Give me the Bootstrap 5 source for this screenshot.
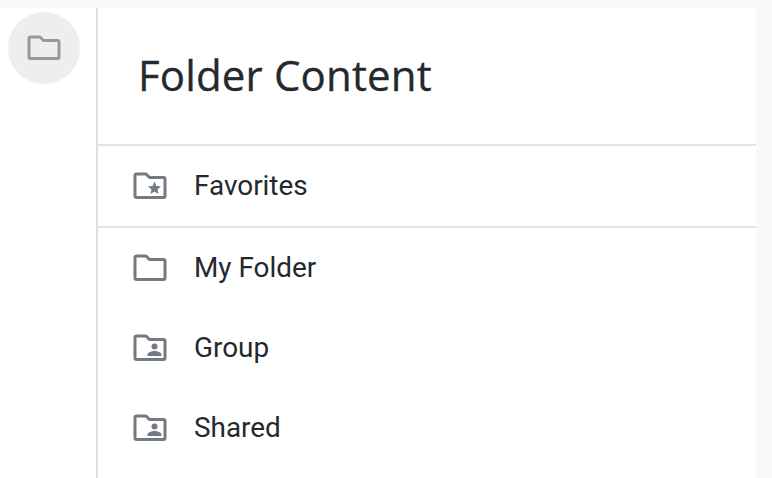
<!DOCTYPE html>
<html lang="en">
<head>
    <meta charset="UTF-8">
    <meta name="viewport" content="width=device-width, initial-scale=1.0">
    <title>Folder Content</title>
    <link href="https://cdn.jsdelivr.net/npm/bootstrap@5.3.0/dist/css/bootstrap.min.css" rel="stylesheet">
    <style>
        html, body {
            height: 100%;
            overflow: hidden;
        }
        body {
            background-color: #f8f8f8;
            font-family: Roboto, sans-serif;
            color: #24292e;
        }
        .page-shell {
            height: 100%;
            padding: 8px 16px 0 0;
        }
        .side-rail {
            width: 98px;
            padding: 4px 0 0 8px;
            border-right: 2px solid #dfdfe3;
        }
        .rail-circle {
            width: 72px;
            height: 72px;
            background-color: #eeeeee;
        }
        .rail-circle svg {
            width: 36px;
            height: 26px;
            margin-top: -1px;
            stroke: #97999e;
        }
        .panel-title {
            height: 138px;
            padding: 41px 0 0 40px;
            border-bottom: 2px solid #e3e3e6;
            font-family: "Open Sans", sans-serif;
            font-size: 42px;
            line-height: 52px;
            font-weight: 400;
            letter-spacing: 0.15px;
            margin: 0;
            -webkit-text-stroke: 0.3px #24292e;
        }
        .folder-row {
            height: 80px;
            padding: 0 0 0 35px;
            gap: 27px;
            font-size: 27.9px;
            color: inherit;
        }
        .folder-row svg {
            width: 34px;
            height: 28px;
            flex-shrink: 0;
        }
        .folder-row.first-row {
            border-bottom: 2px solid #e3e3e6;
            height: 82px;
            padding-bottom: 1px;
        }
        .folder-line {
            fill: none;
            stroke: #737a84;
            stroke-width: 3;
            stroke-linejoin: round;
        }
        .folder-glyph {
            fill: #737a84;
        }
    </style>
</head>
<body>
    <div class="page-shell d-flex">
        <div class="side-rail flex-shrink-0 bg-white">
            <div class="rail-circle rounded-circle d-flex align-items-center justify-content-center">
                <svg viewBox="0 0 34 26" fill="none" stroke-width="3" stroke-linejoin="round">
                    <path d="M2 3.500a1.500 1.500 0 0 1 1.500-1.500h9.500l3.500 3.500h14a1.500 1.500 0 0 1 1.500 1.500v15a1.500 1.500 0 0 1-1.500 1.500h-27a1.500 1.500 0 0 1-1.500-1.500z"/>
                </svg>
            </div>
        </div>
        <div class="flex-grow-1 bg-white">
            <h1 class="panel-title">Folder Content</h1>
            <div class="list-group list-group-flush">
                <div class="folder-row first-row d-flex align-items-center">
                    <svg viewBox="0 0 34 28">
                        <path class="folder-line" d="M2 3.500a1.500 1.500 0 0 1 1.500-1.500h9.500l3.500 3.500h14a1.500 1.500 0 0 1 1.500 1.500v17a1.500 1.500 0 0 1-1.500 1.500h-27a1.500 1.500 0 0 1-1.500-1.500z"/>
                        <path class="folder-glyph" d="M21.500 9.500l1.900 4.400 4.600.4-3.500 3.100 1.100 4.700-4.100-2.500-4.100 2.500 1.100-4.700-3.500-3.100 4.600-.4z"/>
                    </svg>
                    <span>Favorites</span>
                </div>
                <div class="folder-row d-flex align-items-center">
                    <svg viewBox="0 0 34 28">
                        <path class="folder-line" d="M2 3.500a1.500 1.500 0 0 1 1.500-1.500h9.500l3.500 3.500h14a1.500 1.500 0 0 1 1.500 1.500v17a1.500 1.500 0 0 1-1.500 1.500h-27a1.500 1.500 0 0 1-1.500-1.500z"/>
                    </svg>
                    <span>My Folder</span>
                </div>
                <div class="folder-row d-flex align-items-center">
                    <svg viewBox="0 0 34 28">
                        <path class="folder-line" d="M2 3.500a1.500 1.500 0 0 1 1.500-1.500h9.500l3.500 3.500h14a1.500 1.500 0 0 1 1.500 1.500v17a1.500 1.500 0 0 1-1.500 1.500h-27a1.500 1.500 0 0 1-1.500-1.500z"/>
                        <circle class="folder-glyph" cx="21.500" cy="12.500" r="3"/>
                        <path class="folder-glyph" d="M14.500 22v-1.500c0-2.300 4.500-3.500 7-3.500s7 1.200 7 3.500v1.500z"/>
                    </svg>
                    <span>Group</span>
                </div>
                <div class="folder-row d-flex align-items-center">
                    <svg viewBox="0 0 34 28">
                        <path class="folder-line" d="M2 3.500a1.500 1.500 0 0 1 1.500-1.500h9.500l3.500 3.500h14a1.500 1.500 0 0 1 1.500 1.500v17a1.500 1.500 0 0 1-1.500 1.500h-27a1.500 1.500 0 0 1-1.500-1.500z"/>
                        <circle class="folder-glyph" cx="21.500" cy="12.500" r="3"/>
                        <path class="folder-glyph" d="M14.500 22v-1.500c0-2.300 4.500-3.500 7-3.500s7 1.200 7 3.500v1.500z"/>
                    </svg>
                    <span>Shared</span>
                </div>
            </div>
        </div>
    </div>
    <script src="https://cdn.jsdelivr.net/npm/bootstrap@5.3.0/dist/js/bootstrap.bundle.min.js"></script>
</body>
</html>
